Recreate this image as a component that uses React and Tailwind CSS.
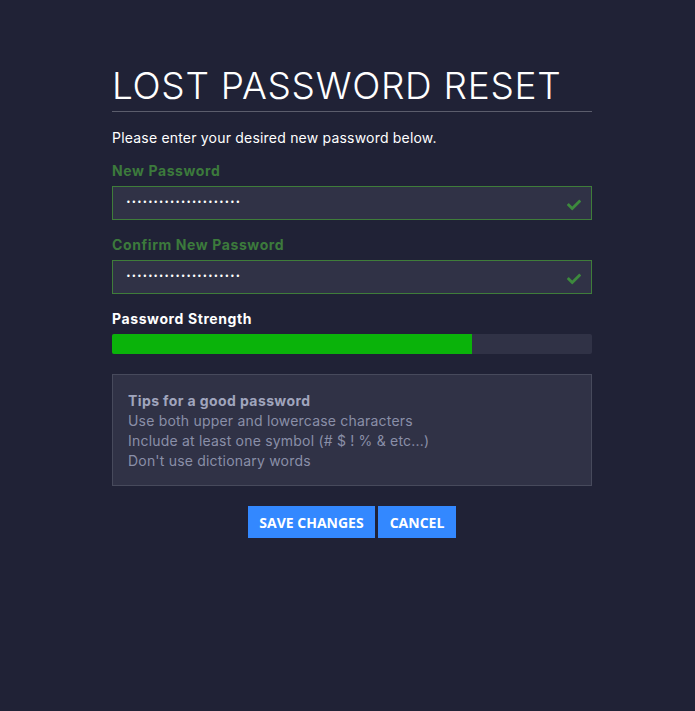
import { FaCheck } from "react-icons/fa";

const dots = "•••••••••••••••••••••";

function PasswordField({ label, top }) {
  return (
    <div className={top}>
      <label className="block text-[14px] font-bold tracking-[0.6px] text-[#3c7a3c] leading-[16px]">{label}</label>
      <div className="mt-[7px] h-[34px] flex items-center justify-between border border-[#3f7d3a] bg-[#303246] pl-[13px] pr-[10px]">
        <span className="text-white text-[8px] tracking-[0.75px] font-['DejaVu_Sans',sans-serif]">{dots}</span>
        <FaCheck className="text-[#3d8a3d] w-[14px] h-[14px] mt-[4px]" />
      </div>
    </div>
  );
}

export default function App() {
  return (
    <div className="min-h-[711px] bg-[#202236] font-['Inter',sans-serif] text-white">
      <div className="w-[480px] pt-[64px] ml-[112px]">
        <h1 className="text-[37px] font-light leading-[44px] tracking-[0.7px] text-white">LOST PASSWORD RESET</h1>
        <div className="mt-[3px] h-px bg-[#5b5d6c]" />
        <p className="mt-[17px] text-[14px] leading-[18px] tracking-[0.2px] text-white">Please enter your desired new password below.</p>

        <PasswordField label="New Password" top="mt-[16px]" />
        <PasswordField label="Confirm New Password" top="mt-[17px]" />

        <div className="mt-[17px] text-[14px] font-bold tracking-[0.6px] leading-[16px] text-white">Password Strength</div>
        <div className="mt-[7px] h-[20px] bg-[#303246] rounded-[2px] overflow-hidden">
          <div className="h-full bg-[#0ab30a]" style={{ width: "75%" }} />
        </div>

        <div className="mt-[20px] border border-[#474a5c] bg-[#303246] px-[15px] pt-[16px] pb-[14px] text-[14px] leading-[20px] tracking-[0.2px] text-[#8a8fa8]">
          <div className="font-bold tracking-[0.4px] text-[#a0a5bd]">Tips for a good password</div>
          <div>Use both upper and lowercase characters</div>
          <div>Include at least one symbol (# $ ! % &amp; etc...)</div>
          <div>Don't use dictionary words</div>
        </div>

        <div className="mt-[20px] flex justify-center gap-[3px] font-['Open_Sans',sans-serif]">
          <button className="h-[32px] w-[127px] bg-[#3388ff] text-white text-[14px] font-bold">SAVE CHANGES</button>
          <button className="h-[32px] w-[78px] bg-[#3388ff] text-white text-[14px] font-bold">CANCEL</button>
        </div>
      </div>
    </div>
  );
}
